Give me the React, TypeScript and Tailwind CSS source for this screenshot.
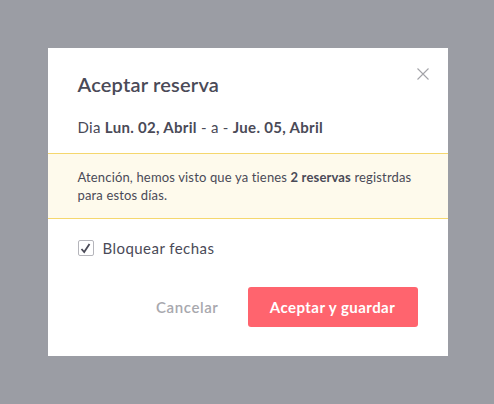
import React, { useState } from "react";

const App = () => {
  const [blocked, setBlocked] = useState(true);

  return (
    <div
      className="w-full h-screen bg-[#9b9da4] flex items-center justify-center pl-px"
      style={{ fontFamily: "Lato, 'Open Sans', sans-serif" }}
    >
      <div className="relative w-[400px] bg-white text-[#4a4a57]">
        <button className="absolute top-[20px] right-[19px] w-[12px] h-[12px] text-[#a3a3a8]">
          <svg width="12" height="12" viewBox="0 0 12 12" fill="none" stroke="currentColor" strokeWidth="1.1">
            <path d="M0.5 0.5 L11.5 11.5 M11.5 0.5 L0.5 11.5" />
          </svg>
        </button>

        <div className="px-[30px] pt-[24px]">
          <h2 className="text-[20px] leading-[24px] font-semibold tracking-[0.01em]">Aceptar reserva</h2>
          <p className="mt-[21px] text-[15px] leading-[20px] tracking-[0.02em]">
            Dia <b className="font-bold">Lun. 02, Abril</b> - a - <b className="font-bold">Jue. 05, Abril</b>
          </p>
        </div>

        <div className="mt-[16px] border-y border-[#f5d76e] bg-[#fefaec] px-[30px] py-[14px] text-[13px] leading-[18px] tracking-[0.012em]">
          Atención, hemos visto que ya tienes <b className="font-bold">2 reservas</b> registrdas para estos días.
        </div>

        <div className="px-[30px] pt-[19px] pb-[29px]">
          <label className="flex items-center gap-[9px] text-[15px] leading-[20px] tracking-[0.03em] cursor-pointer">
            <span
              onClick={() => setBlocked(!blocked)}
              className="w-[16px] h-[16px] border border-[#b5b5bb] rounded-[2px] flex items-center justify-center"
            >
              {blocked && (
                <svg width="11" height="11" viewBox="0 0 11 11" fill="none" stroke="#4a4a57" strokeWidth="1.8">
                  <path d="M1.5 6 L4.2 9 L9.5 1" />
                </svg>
              )}
            </span>
            Bloquear fechas
          </label>

          <div className="mt-[29px] flex items-center justify-end gap-[29px]">
            <button className="text-[15px] font-semibold tracking-[0.04em] text-[#a8a8ae]">Cancelar</button>
            <button className="w-[170px] h-[40px] rounded-[3px] bg-[#ff646e] text-white text-[15px] font-bold tracking-[0.03em]">
              Aceptar y guardar
            </button>
          </div>
        </div>
      </div>
    </div>
  );
};

export default App;
